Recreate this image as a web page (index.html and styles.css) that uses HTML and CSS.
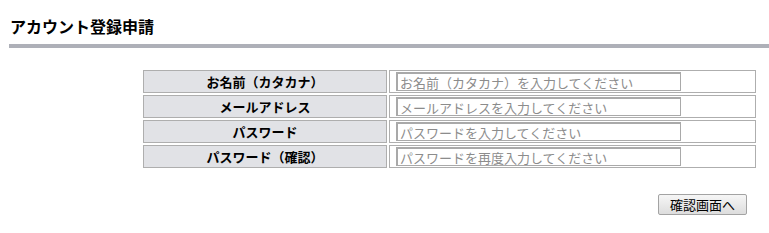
FILE: index.html
```html
<!DOCTYPE html>
<html lang="ja">
<head>
  <meta charset="UTF-8">
  <title>アカウント登録申請</title>
  <link rel="stylesheet" href="styles.css">
</head>
<body>
  <h1 class="ttl">アカウント登録申請</h1>
  <form class="frm">
    <table class="tbl">
      <tr>
        <th>お名前（カタカナ）</th>
        <td><input type="text" placeholder="お名前（カタカナ）を入力してください"></td>
      </tr>
      <tr>
        <th>メールアドレス</th>
        <td><input type="text" placeholder="メールアドレスを入力してください"></td>
      </tr>
      <tr>
        <th>パスワード</th>
        <td><input type="password" placeholder="パスワードを入力してください"></td>
      </tr>
      <tr>
        <th>パスワード（確認）</th>
        <td><input type="password" placeholder="パスワードを再度入力してください"></td>
      </tr>
    </table>
    <div class="btns">
      <button type="button" class="btn">確認画面へ</button>
    </div>
  </form>
</body>
</html>
```

FILE: styles.css
```css
* {
  margin: 0;
  padding: 0;
  box-sizing: border-box;
}

body {
  font-family: "Noto Sans CJK JP", "Noto Sans", sans-serif;
  font-size: 13px;
  color: #000;
  background: #fff;
  padding-left: 9px;
}

.ttl {
  font-size: 16px;
  font-weight: 700;
  line-height: 20px;
  padding-top: 16px;
  padding-bottom: 8px;
  padding-left: 1px;
  border-bottom: 4px solid #aeb0b8;
}

.frm {
  padding-top: 20px;
}

.tbl {
  border-collapse: separate;
  border-spacing: 2px;
  margin-left: 132px;
}

.tbl th,
.tbl td {
  border: 1px solid #aeaeae;
  height: 23px;
}

.tbl th {
  width: 244px;
  background: #e1e2e6;
  font-weight: 700;
  font-size: 13px;
  line-height: 18px;
  text-align: center;
}

.tbl td {
  width: 367px;
  padding: 0 0 0 6px;
  vertical-align: middle;
}

.tbl input {
  display: block;
  width: 285px;
  height: 19px;
  border: 2px solid #a9a9a9;
  border-right-width: 1px;
  border-bottom-width: 1px;
  padding: 0 2px;
  font: 13px "Noto Sans CJK JP", sans-serif;
  color: #000;
}

.tbl input::placeholder {
  color: #8c8c8c;
}

.btns {
  display: flex;
  justify-content: flex-end;
  padding-top: 24px;
  padding-right: 22px;
}

.btn {
  width: 89px;
  height: 21px;
  border: 1px solid #a3a3a3;
  border-radius: 2px;
  background: linear-gradient(#f6f6f6, #dddddd);
  font: 13px/19px "Noto Sans CJK JP", sans-serif;
  color: #000;
}
```
